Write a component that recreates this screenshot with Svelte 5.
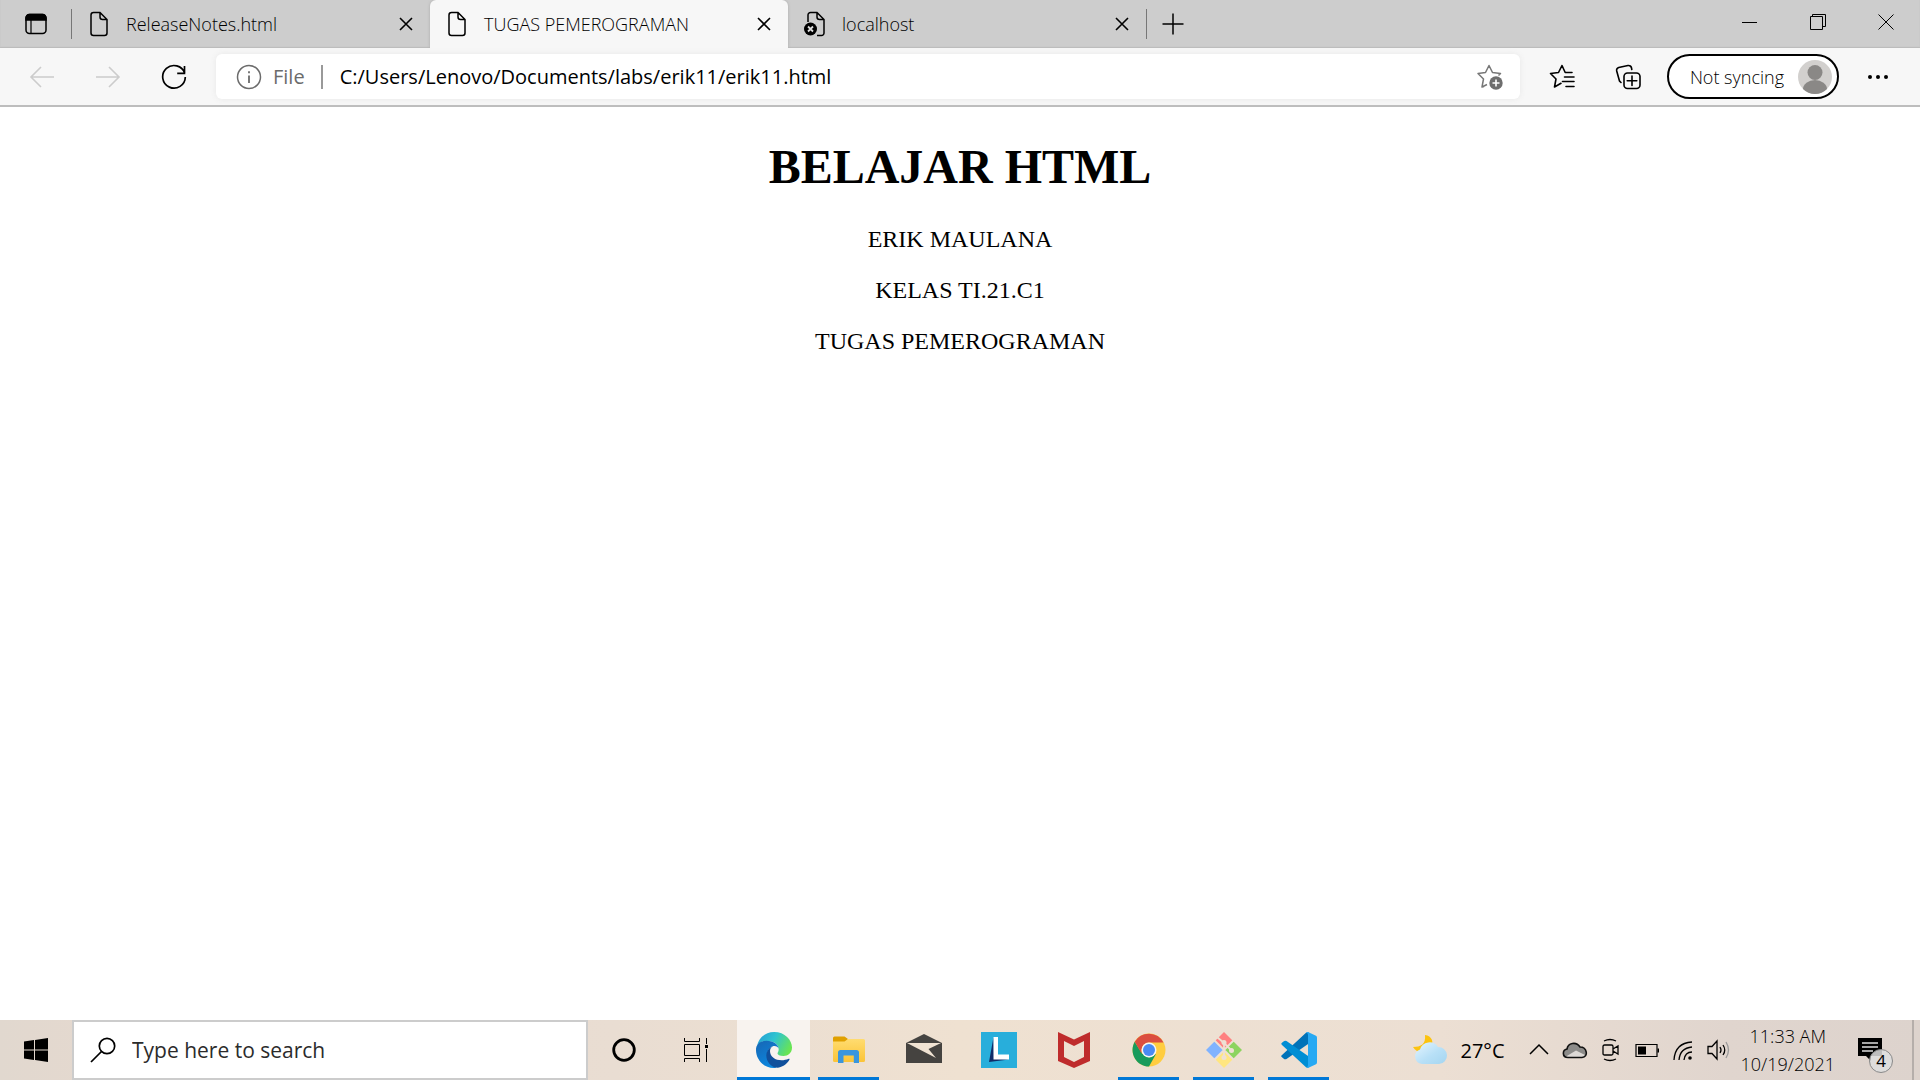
<script>
  const tabs = [
    { title: 'ReleaseNotes.html', active: false, failed: false },
    { title: 'TUGAS PEMEROGRAMAN', active: true, failed: false },
    { title: 'localhost', active: false, failed: true }
  ];
  const lines = ['ERIK MAULANA', 'KELAS TI.21.C1', 'TUGAS PEMEROGRAMAN'];
  const apps = [
    { id: 'edge', label: 'Microsoft Edge', state: 'current' },
    { id: 'files', label: 'File Explorer', state: 'open' },
    { id: 'mail', label: 'Mail', state: '' },
    { id: 'lenovo', label: 'Lenovo Vantage', state: '' },
    { id: 'mcafee', label: 'McAfee', state: '' },
    { id: 'chrome', label: 'Google Chrome', state: 'open' },
    { id: 'git', label: 'Git', state: 'open' },
    { id: 'code', label: 'Visual Studio Code', state: 'open' }
  ];
  let address = 'C:/Users/Lenovo/Documents/labs/erik11/erik11.html';
</script>

<div class="screen">
  <header class="tabbar">
    <button class="tabmenu" aria-label="Tab actions menu">
      <svg width="24" height="24" fill="none" stroke="#000" stroke-width="1.5"><rect x="2" y="2.500" width="20" height="19" rx="3.500" /><path d="M2 8V6a3.500 3.500 0 0 1 3.500-3.500h13A3.500 3.500 0 0 1 22 6v2z" fill="#000" /><path d="M7 8v13" stroke-width="1.200" /></svg>
    </button>
    <span class="rule"></span>
    {#each tabs as tab}
      <div class="tab" class:active={tab.active}>
        <button class="tabname">
          {#if tab.failed}
            <svg width="24" height="26" fill="none" stroke="#000" stroke-width="1.500"><path d="M5 11V4a2.500 2.500 0 0 1 2.500-2.500H14l7 7V22a2.500 2.500 0 0 1-2.500 2.500H14M14 1.500V6a2.500 2.500 0 0 0 2.500 2.500H21" /><circle cx="7.500" cy="18" r="6.500" fill="#000" stroke="none" /><path d="m5 15.500 5 5m0-5-5 5" stroke="#ddd" stroke-width="1.800" /></svg>
          {:else}
            <svg width="24" height="26" fill="none" stroke="#000" stroke-width="1.500"><path d="M6.500 1.500H13l7 7V22a2.500 2.500 0 0 1-2.500 2.500h-11A2.500 2.500 0 0 1 4 22V4a2.500 2.500 0 0 1 2.500-2.500zM13 1.500V6a2.500 2.500 0 0 0 2.500 2.500H20" /></svg>
          {/if}
          <span>{tab.title}</span>
        </button>
        <button class="close" aria-label="Close {tab.title}">
          <svg width="14" height="14" stroke="#000" stroke-width="1.600"><path d="m1 1 12 12M13 1 1 13" /></svg>
        </button>
      </div>
    {/each}
    <span class="rule"></span>
    <button class="plus" aria-label="New tab">
      <svg width="22" height="22" stroke="#000" stroke-width="1.500"><path d="M11 .500v21M.500 11h21" /></svg>
    </button>
    <div class="window">
      <button aria-label="Minimize"><svg width="16" height="16" stroke="#000"><path d="M0 8.500h15" /></svg></button>
      <button aria-label="Restore"><svg width="16" height="16" fill="none" stroke="#000"><path d="M.500 2.500h12v13H.500zM2.500 2.500v-2h13v12h-3" /></svg></button>
      <button aria-label="Close"><svg width="16" height="16" stroke="#000"><path d="m.500.500 15 15m0-15-15 15" /></svg></button>
    </div>
  </header>

  <nav class="toolbar">
    <button class="tool" aria-label="Back" disabled><svg width="26" height="24" fill="none" stroke="#ccc" stroke-width="1.600"><path d="M25 12H2M12 2 2 12l10 10" /></svg></button>
    <button class="tool" aria-label="Forward" disabled><svg width="26" height="24" fill="none" stroke="#ccc" stroke-width="1.600"><path d="M1 12h23M14 2l10 10-10 10" /></svg></button>
    <button class="tool" aria-label="Refresh"><svg width="26" height="26" fill="none" stroke="#000" stroke-width="1.700"><path d="M23.700 9.200a11.300 11.300 0 1 0 .600 3.800M23.500 2v7.300h-7.300" /></svg></button>
    <div class="address">
      <button class="site">
        <svg width="26" height="26" fill="none" stroke="#6b6b6b" stroke-width="1.500"><circle cx="13" cy="13" r="11.500" /><path d="M13 11.500V19M13 7.200v2" stroke-width="1.800" /></svg>
        <span>File</span>
      </button>
      <span class="divider"></span>
      <input type="text" aria-label="Address" bind:value={address} spellcheck="false" />
      <button class="add" aria-label="Add this page to favorites">
        <svg width="28" height="28" fill="none" stroke="#777" stroke-width="1.500" stroke-linejoin="round"><path d="M8 23.500 6 24l1.500-8L2 10.500l7.500-1L13 2.500l3.500 7 8 1-2 2M6 24l5-2.500" /><circle cx="20" cy="20" r="6.700" fill="#6e6e6e" stroke="none" /><path d="M20 16.500v7M16.500 20h7" stroke="#fff" stroke-width="1.600" /></svg>
      </button>
    </div>
    <button class="tool" aria-label="Favorites"><svg width="26" height="26" fill="none" stroke="#000" stroke-width="1.600" stroke-linejoin="round" stroke-linecap="round"><path d="M23 8.500h-6.800L13 1.500l-3.500 7-8 1L7 15l-1.500 8 6.500-3.700M15.500 13H25M13.500 17.500H25M17 22.500h8" /></svg></button>
    <button class="tool" aria-label="Collections"><svg width="26" height="26" fill="none" stroke="#000" stroke-width="1.600" stroke-linecap="round"><path d="M6 18.500 4.500 17 1.700 7a3 3 0 0 1 2-3.500L13 1.500A3 3 0 0 1 16.500 4l.300 1.500" /><rect x="9" y="9" width="16" height="15.500" rx="3.500" /><path d="M17 12v9.500M12.200 16.800h9.600" /></svg></button>
    <button class="profile">
      <span>Not syncing</span>
      <svg width="34" height="34"><circle cx="17" cy="17" r="17" fill="#d2d0ce" /><circle cx="17" cy="12.500" r="7.500" fill="#8a8886" /><path d="M5 29a12 9 0 0 1 24 0 17 17 0 0 1-24 0z" fill="#8a8886" /></svg>
    </button>
    <button class="more" aria-label="Settings and more"><svg width="22" height="6"><circle cx="3" cy="3" r="2" /><circle cx="11" cy="3" r="2" /><circle cx="19" cy="3" r="2" /></svg></button>
  </nav>

  <main>
    <h1>BELAJAR HTML</h1>
    {#each lines as line}
      <p>{line}</p>
    {/each}
  </main>

  <footer class="taskbar">
    <button class="start" aria-label="Start"><svg width="24" height="24"><path d="M0 3.500 10 2v9.500H0zM11 1.900 24 0v11.500H11zM0 12.500h10V22L0 20.500zM11 12.500h13V24l-13-1.900z" /></svg></button>
    <label class="search">
      <svg width="26" height="26" fill="none" stroke="#000" stroke-width="1.700"><circle cx="17" cy="9" r="7.700" /><path d="M11.500 14.500 1 25" /></svg>
      <input type="text" aria-label="Search" placeholder="Type here to search" />
    </label>
    <button class="system" aria-label="Cortana"><svg width="26" height="26"><circle cx="13" cy="13" r="10.300" fill="none" stroke="#000" stroke-width="2.800" /></svg></button>
    <button class="system" aria-label="Task View"><svg width="26" height="24" fill="none" stroke="#000"><path d="M1.500 6.500h15v11h-15zM1.500 0v3.500h15V0M1.500 24v-3.500h15V24M23.500 0v6M23.500 11v13" /><path d="M22 7h3v3h-3z" fill="#000" stroke="none" /></svg></button>
    <div class="apps">
      {#each apps as app}
        <button class="app {app.state}" aria-label={app.label}>
          {#if app.id === 'edge'}
            <svg width="36" height="36" viewBox="0 0 36 36">
              <defs>
                <linearGradient id="eg" x1="0" y1=".2" x2="1" y2=".6"><stop offset="0" stop-color="#269fd5" /><stop offset=".45" stop-color="#2fc4d0" /><stop offset="1" stop-color="#6ae550" /></linearGradient>
                <linearGradient id="eb" x1="0" y1="0" x2=".5" y2="1"><stop offset="0" stop-color="#1766b4" /><stop offset="1" stop-color="#0c86dd" /></linearGradient>
              </defs>
              <path d="M1 14C3 5 10 0 18 0c11 0 18 8 18 15.500C36 21 32 24 27.500 24c-4 0-6-1.500-6-2.500s1.200-1.600 1.200-4.500C22.700 13 19 9 11 9 5 9 2 12 1 14z" fill="url(#eg)" />
              <path d="M0 18C0 12 4 8.700 10.500 8.700c7.500 0 12 4 12.200 8-.4-1.700-3-3.200-5.200-2.700-4 1-7.500 6-6 11 1.500 5.300 6 9.500 9 10.700C10 37.500 0 29 0 18z" fill="url(#eb)" />
              <path d="M17 14c-3.500 1.500-7.500 5-6.500 11.500 1 6 6 10.500 11.500 10.300 5.500-1 9.500-4.500 11.500-8.300.3-.8-.3-1-.8-.7C24 30.500 14 27 14 19c0-2.200 1.200-4 3-5z" fill="#11509c" />
            </svg>
          {:else if app.id === 'files'}
            <svg width="34" height="30" viewBox="0 0 34 30">
              <defs><linearGradient id="ff" x1="0" y1="0" x2="0" y2="1"><stop offset="0" stop-color="#ffdc70" /><stop offset="1" stop-color="#fbc437" /></linearGradient></defs>
              <path d="M1 3a1.500 1.500 0 0 1 1.500-1.500h10L16 4l-3 6H1z" fill="#e0a000" /><path d="M1 6.500h11.500L16 4h15.500A1.500 1.500 0 0 1 33 5.500v20a1.500 1.500 0 0 1-1.500 1.500h-29A1.500 1.500 0 0 1 1 25.500z" fill="url(#ff)" />
              <path d="M6 28V17.500A2.500 2.500 0 0 1 8.500 15h16a2.500 2.500 0 0 1 2.500 2.500V28h-5.200v-7.500H11.500V28z" fill="#3a96dd" />
            </svg>
          {:else if app.id === 'mail'}
            <svg width="36" height="36" viewBox="0 0 36 36" fill="#454340"><path d="M0 11 18 2l18 9v20H0z" /><path d="M1 11h34L22.500 17 30 26 1 11z" fill="#f0e3d3" /></svg>
          {:else if app.id === 'lenovo'}
            <svg width="36" height="36" viewBox="0 0 36 36"><path d="M0 0h36v36H0z" fill="#28aedb" /><path d="M12.500 5 8 30l20-2.500-15-1z" fill="#102c68" /><path d="M12.500 5H17v17.500h11v5H12.500z" fill="#fff" /></svg>
          {:else if app.id === 'mcafee'}
            <svg width="36" height="36" viewBox="0 0 36 36"><path d="m2 0 16 7.500L34 0v29l-16 7-16-7zm6 9v16l10 5 10-5V9l-10 5z" fill="#bf2c2c" fill-rule="evenodd" /></svg>
          {:else if app.id === 'chrome'}
            <svg width="36" height="36" viewBox="0 0 36 36"><circle cx="18" cy="18" r="16.500" fill="#ffcd40" /><path d="M3.700 9.800A16.500 16.500 0 0 0 18 34.500l7-12.500-7 3.500-7-4z" fill="#189b5c" /><path d="M3.700 9.800A16.500 16.500 0 0 1 32.500 10.500H18a7.500 7.500 0 0 0-7.500 7.500v3.500z" fill="#db4e40" /><circle cx="18" cy="18" r="7.500" fill="#f5f5f5" /><circle cx="18" cy="18" r="6" fill="#4a8af4" /></svg>
          {:else if app.id === 'git'}
            <svg width="36" height="36" viewBox="0 0 36 36"><path d="m18 0 9 9-9 9-9-9z" fill="#ff8080" /><path d="m9 9 9 9-9 9-9-9z" fill="#80b3ff" /><path d="m27 9 9 9-9 9-9-9z" fill="#8cd45f" /><path d="m18 18 9 9-9 9-9-9z" fill="#ffe680" /><g fill="none" stroke="#eee0d3" stroke-width="1.800"><path d="m8.500 8.500 19 19M27.500 8.500l-19 19M11 5l7 6v14M18 11l8 8" /></g><g fill="#eee0d3"><circle cx="18" cy="10.500" r="2.500" /><circle cx="18" cy="25.500" r="2.500" /><circle cx="25.500" cy="18.500" r="2.500" /></g></svg>
          {:else}
            <svg width="36" height="36" viewBox="0 0 36 36"><path d="M1 23 25 .700q2-1 3.500.500V11L5.500 27q-1.700.700-3-.600L.700 25q-1-1 .300-2z" fill="#0072b8" /><path d="m1 13 24 22.300q2 1 3.500-.500V25L5.500 9q-1.700-.700-3 .600L.700 11q-1 1 .300 2z" fill="#008ed4" /><path d="M25 35.500c1 .600 2 .500 3 0l7-3.300q1-.700 1-2V5.800q0-1.300-1-2L28 .500c-1-.500-2-.600-3 0 1 .200 2 1 2 2.500v30c0 1.500-1 2.300-2 2.500z" fill="#27a9f3" /></svg>
          {/if}
        </button>
      {/each}
    </div>
    <div class="tray">
      <button class="weather">
        <svg width="36" height="30" viewBox="0 0 36 30">
          <defs><linearGradient id="cl" x1="0" y1="0" x2="1" y2="1"><stop offset="0" stop-color="#e6f5ff" /><stop offset=".55" stop-color="#b8e0f7" /><stop offset="1" stop-color="#a4d5f0" /></linearGradient></defs>
          <path d="M13 0c7 1 9 7 6 12-4 7-14 7-18 0 8 0 13-3 12-12z" fill="#fcc30f" /><path d="M10 29a7.500 7.500 0 0 1-2-14.500A10 10 0 0 1 26 12a8.500 8.500 0 0 1 1 17z" fill="url(#cl)" />
        </svg>
        <span>27°C</span>
      </button>
      <button class="small" aria-label="Show hidden icons"><svg width="20" height="24" fill="none" stroke="#000" stroke-width="1.500"><path d="m1 16 9-9 9 9" /></svg></button>
      <button class="small" aria-label="OneDrive"><svg width="26" height="24" viewBox="0 0 26 24"><path d="M6 19.500C0 19.500 0 12 5 11c1-6 9-8 13-2 7 0 9 10 2 10.500z" fill="#8c8b89" /><path d="m4 18.500 10-6 9 4.500q-1 2.500-3 2.500H6z" fill="#ddd9d6" /><path d="M6 19.500C0 19.500 0 12 5 11c1-6 9-8 13-2 7 0 9 10 2 10.500z" fill="none" stroke="#111" stroke-width="1.600" /></svg></button>
      <button class="small" aria-label="Meet Now"><svg width="20" height="24" fill="none" stroke="#000" stroke-width="1.300"><path d="M3.500 7h7q1.500 0 1.500 1.500v7q0 1.500-1.500 1.500h-7Q2 17 2 15.500v-7Q2 7 3.500 7zM12 11l5-3v8l-5-3M3 3q6-3 12 0M3 21q6 3 12 0" /></svg></button>
      <button class="small" aria-label="Battery"><svg width="26" height="24" fill="none" stroke="#000" stroke-width="1.200"><path d="M2 6.500h21v12H2z" /><path d="M4 8.500h8v8H4zM23.500 10.500H25v4h-1.500z" fill="#000" stroke="none" /></svg></button>
      <button class="small" aria-label="Network"><svg width="20" height="24" fill="none" stroke="#000" stroke-width="1.300"><path d="M1 22Q2 5 19 4M6 22Q7 10 19 9M11 22q1-8 8-8" /><circle cx="17" cy="20" r="1.800" fill="#000" stroke="none" /></svg></button>
      <button class="small" aria-label="Volume"><svg width="24" height="24" fill="none" stroke="#000" stroke-width="1.300"><path d="M1 8.500h4l5-5.500v18l-5-5.500H1zM13 9q2 3 0 6M16 7q3.500 5 0 10" /><path d="M19 4q5 8 0 16" stroke="#999" /></svg></button>
      <button class="clock"><span>11:33 AM</span><span>10/19/2021</span></button>
      <button class="notices" aria-label="4 new notifications">
        <svg width="26" height="26"><path d="M1 1h24v18H14v5l-5-5H1z" /><path d="M5 6h16M5 10h16M5 14h11" stroke="#ddd" stroke-width="1.300" /></svg>
        <span class="badge">4</span>
      </button>
      <button class="desktop" aria-label="Show desktop"></button>
    </div>
  </footer>
</div>

<style>
  :global(body) { margin: 0; background: #fff; }
  .screen { display: flex; flex-direction: column; min-height: 100vh; font-family: "Open Sans", "Noto Sans", sans-serif; color: #000; }
  button { display: flex; align-items: center; justify-content: center; flex: none; margin: 0; padding: 0; border: 0; background: none; color: inherit; font: inherit; white-space: nowrap; }
  input { flex: 1; min-width: 0; padding: 0; border: 0; outline: 0; background: none; color: inherit; font: inherit; }
  svg { display: block; flex: none; }

  .tabbar { display: flex; align-items: center; height: 48px; background: #cdcdcd; box-shadow: inset 0 -1px 1px #bbb; }
  .tabmenu { width: 71px; height: 48px; }
  .rule { width: 1px; height: 30px; flex: none; background: #777; }
  .tab { display: flex; align-items: center; flex: 0 1 358px; min-width: 0; height: 48px; font-size: 18px; font-weight: 340; }
  .tab.active { background: #f7f7f7; border-radius: 6px 6px 0 0; box-shadow: 0 0 3px #aaa; clip-path: inset(0 -3px 0 -3px); }
  .tabname { flex: 1; min-width: 0; height: 46px; justify-content: flex-start; gap: 15px; padding-left: 15px; }
  .close { width: 48px; height: 48px; }
  .plus { width: 52px; height: 46px; }
  .window { display: flex; align-self: flex-start; margin-left: auto; }
  .window button { width: 68px; height: 43px; }

  .toolbar { display: flex; align-items: center; height: 57px; padding: 0 4px 0 9px; background: #f7f7f7; border-bottom: 2px solid #bdbdbd; }
  .tool { width: 66px; height: 45px; }
  .address { display: flex; align-items: center; flex: 1; min-width: 0; height: 45px; margin: 0 9px; border-radius: 6px; background: #fff; box-shadow: 0 0 6px #e8e8e8; font-size: 20px; }
  .site { height: 45px; gap: 11px; padding: 0 16px 0 20px; color: #6b6b6b; }
  .divider { width: 2px; height: 24px; margin-right: 17px; background: #999; }
  .add { width: 60px; height: 45px; }
  .profile { height: 45px; gap: 14px; padding: 0 5px 0 21px; border: 2px solid #000; border-radius: 23px; background: #fff; font-size: 18px; font-weight: 340; margin-left: 6px; }
  .more { width: 77px; height: 45px; }

  main { flex: 1; padding: 0 12px; font-family: "Liberation Serif", serif; font-size: 24px; line-height: 27px; text-align: center; }
  h1 { margin: 32px 0; font-size: 48px; line-height: 55px; }
  p { margin: 24px 0; }

  .taskbar { display: flex; align-items: stretch; height: 60px; background: linear-gradient(90deg, #e1d8cf 0, #e8d9cf 10%, #e9ddd2 32%, #efe1d1 50%, #ecdfd3 75%, #e0d5ce 90%, #ddd3cd 100%); }
  .start { width: 72px; }
  .search { display: flex; align-items: center; flex: 0 1 516px; min-width: 0; gap: 16px; box-sizing: border-box; padding-left: 16px; border: 2px solid #ccc; background: #fff; font-size: 21px; }
  .search input::placeholder { color: #2b2b2b; opacity: 1; }
  .system { width: 72px; }
  .apps { display: flex; margin-left: 4px; }
  .app { width: 61px; margin: 0 7px; box-sizing: border-box; border-top: 3px solid transparent; border-bottom: 3px solid transparent; }
  .app.open { border-bottom-color: #0078d7; }
  .app.current { width: 73px; margin: 0 1px; border-top-color: #f8f3ef; border-bottom-color: #0078d7; background: #f8f3ef; }
  .tray { display: flex; align-items: center; margin-left: auto; }
  .weather { height: 60px; gap: 12px; margin-right: 16px; font-size: 20px; }
  .small { width: 36px; height: 60px; }
  .clock { flex-direction: column; height: 60px; padding: 0 6px 0 4px; font-size: 18px; font-weight: 340; line-height: 28px; }
  .notices { position: relative; width: 58px; height: 60px; margin-right: 13px; }
  .badge { position: absolute; left: 28px; top: 29px; width: 24px; height: 24px; box-sizing: border-box; border: 1px solid #888; border-radius: 50%; background: rgba(222, 222, 222, 0.85); font-size: 17px; line-height: 22px; text-align: center; }
  .desktop { width: 8px; height: 60px; border-left: 2px solid #b5aeaa; }
</style>
